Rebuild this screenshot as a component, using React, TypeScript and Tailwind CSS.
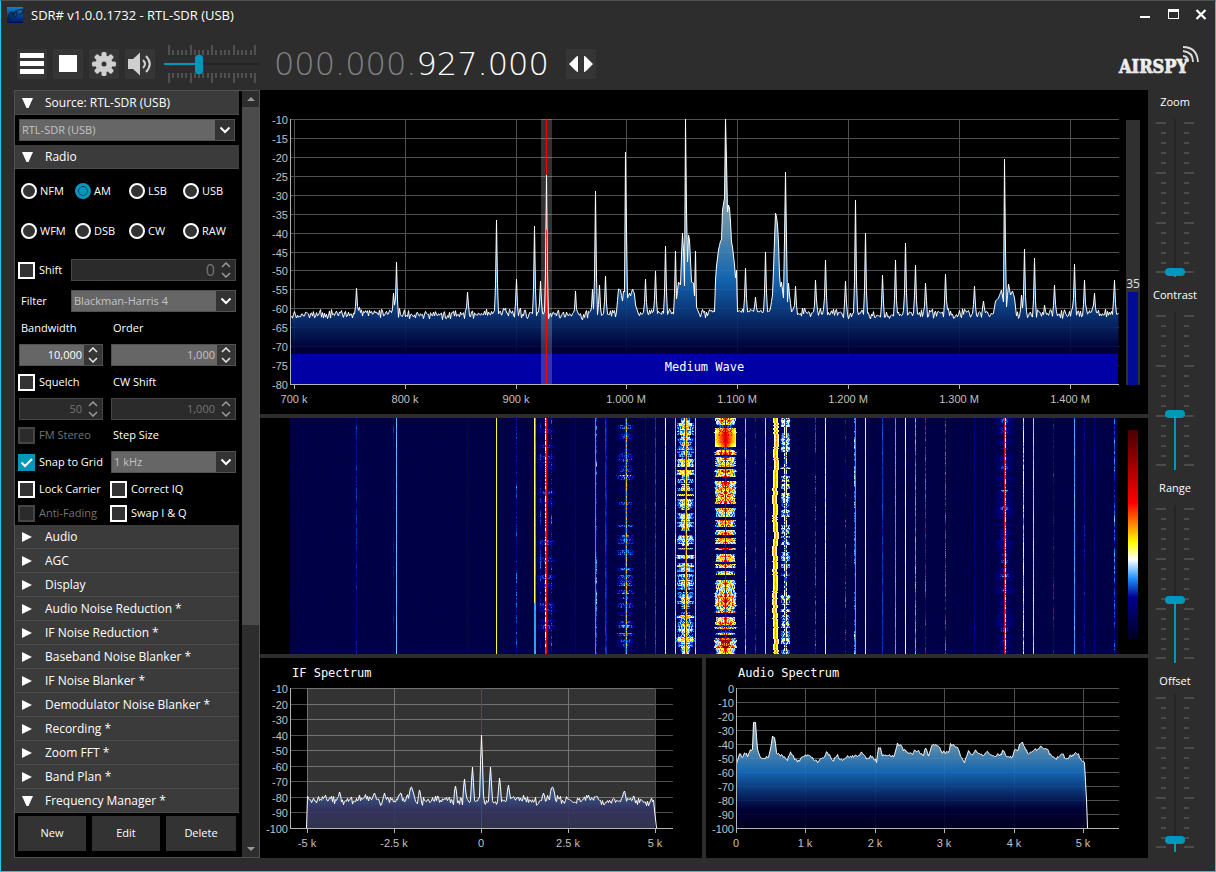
import { useEffect, useLayoutEffect, useRef, useState } from 'react';
import type { ReactNode } from 'react';
import clsx from 'clsx';

type Point = [number, number];

const COLLAPSED_PANELS = [
  'Audio',
  'AGC',
  'Display',
  'Audio Noise Reduction *',
  'IF Noise Reduction *',
  'Baseband Noise Blanker *',
  'IF Noise Blanker *',
  'Demodulator Noise Blanker *',
  'Recording *',
  'Zoom FFT *',
  'Band Plan *',
];
const MODES = ['NFM', 'AM', 'LSB', 'USB', 'WFM', 'DSB', 'CW', 'RAW'];

// Heatmap palette, weakest signal first
const PALETTE: [number, number, number, number][] = [
  [0, 0, 0, 32],
  [0.2, 0, 0, 144],
  [0.29, 30, 144, 255],
  [0.38, 255, 255, 255],
  [0.46, 255, 255, 0],
  [0.645, 255, 0, 0],
  [1, 74, 0, 0],
];

// Narrow carriers: [x, y of the tip]
const CARRIERS: Point[] = [
  [96, 198], [133, 203], [136, 172], [207, 202], [236, 130], [256, 189], [274, 136], [280, 191],
  [286, 85], [315, 201], [332, 199], [335, 101], [339, 195], [345, 186], [385, 189], [395, 181],
  [405, 156], [415, 161], [485, 178], [495, 207], [505, 162], [535, 196], [555, 190], [565, 170],
  [585, 191], [595, 110], [605, 143], [622, 185], [635, 170], [645, 153], [655, 175], [665, 193],
  [685, 184], [714, 196], [723, 211], [761, 205], [764, 159], [774, 168], [784, 215], [794, 195],
  [814, 174], [824, 190], [834, 203], [854, 190],
];

// Wide stations with visible sidebands
const STATIONS: Point[][] = [
  [[356, 222], [358, 199], [360, 200], [362, 211], [363, 201], [364, 202], [365, 62], [366, 140], [367, 208], [369, 203], [370, 206], [372, 199], [374, 204], [375, 215], [378, 224]],
  [[416, 209], [418, 192], [420, 195], [421, 165], [422, 143], [423, 160], [424, 196], [425, 29], [426, 120], [427, 172], [428, 145], [429, 150], [430, 170], [431, 192], [433, 193], [434, 206], [435, 161], [436, 217], [440, 227]],
  [[454, 222], [455, 190], [456, 176], [458, 160], [460, 151], [461, 150], [462, 120], [464, 108], [465, 29], [466, 70], [467, 122], [468, 115], [469, 118], [470, 132], [471, 152], [472, 157], [474, 175], [475, 188], [476, 180], [477, 222]],
  [[510, 218], [512, 205], [513, 180], [514, 150], [515, 123], [516, 127], [517, 135], [518, 152], [519, 185], [520, 197], [521, 192], [522, 200], [523, 208], [524, 150], [525, 82], [526, 150], [527, 212], [528, 193], [529, 205], [531, 222]],
  [[733, 223], [735, 211], [738, 208], [741, 200], [743, 212], [744, 69], [745, 160], [746, 217], [748, 194], [750, 205], [752, 201], [754, 208], [756, 226]],
];

const IF_PEAKS: Point[] = [
  [79, 134], [114, 135], [124, 135], [140, 135], [150, 131], [151, 129], [152, 132], [159, 132],
  [195, 128], [204, 121], [212, 109], [221, 77], [230, 109], [239, 120], [248, 127], [283, 135],
  [291, 131], [292, 129], [293, 131], [364, 133],
];

const AUDIO_TRACE: Point[] = [
  [30, 106], [33, 95], [36, 99], [39, 95], [41, 98], [44, 91], [46, 92], [47, 65], [49, 65], [51, 92],
  [54, 100], [59, 99], [62, 100], [64, 92], [66, 79], [68, 79], [70, 95], [76, 98], [81, 102], [84, 94],
  [87, 99], [91, 104], [96, 99], [101, 97], [106, 100], [111, 104], [117, 99], [120, 95], [124, 99],
  [127, 102], [131, 97], [134, 102], [141, 99], [151, 98], [155, 95], [159, 100], [166, 98], [170, 104],
  [172, 90], [174, 91], [176, 98], [181, 97], [188, 98], [191, 86], [195, 87], [197, 92], [206, 96],
  [208, 91], [214, 95], [217, 97], [219, 89], [222, 98], [226, 86], [232, 88], [235, 94], [242, 95],
  [244, 86], [251, 89], [254, 98], [258, 104], [262, 92], [266, 98], [269, 93], [272, 96], [277, 98],
  [281, 94], [286, 97], [294, 97], [297, 92], [299, 98], [306, 99], [308, 92], [311, 93], [313, 87],
  [316, 84], [319, 92], [322, 95], [327, 93], [334, 89], [341, 92], [344, 97], [349, 102], [354, 96],
  [357, 97], [360, 102], [364, 98], [371, 95], [375, 103], [378, 105], [380, 142], [381, 170],
];

function createRandom(seed: number) {
  let state = seed;
  return () => {
    state = (state * 1664525 + 1013904223) >>> 0;
    return state / 4294967296;
  };
}

function interpolate(points: Point[], x: number): number {
  for (let i = 1; i < points.length; i++) {
    if (x <= points[i][0]) {
      const [x0, y0] = points[i - 1];
      const [x1, y1] = points[i];
      return y0 + ((y1 - y0) * (x - x0)) / (x1 - x0);
    }
  }
  return points[points.length - 1][1];
}

function addPeaks(trace: Map<number, number>, peaks: Point[], slope: number) {
  for (const [x, y] of peaks) {
    for (const side of [-1, 1]) {
      const base = trace.get(x + side) ?? y;
      trace.set(x + side, Math.min(base, base + (y - base) * slope));
    }
    trace.set(x, y);
  }
}

function buildRfTrace(): Point[] {
  const random = createRandom(7);
  const trace = new Map<number, number>();
  for (let x = 31; x <= 858; x++) trace.set(x, 224 + (random() + random() - 1) * 6 + Math.sin(x / 23));
  for (let x = 448; x < 454; x++) trace.set(x, 219 + random() * 4);
  for (let x = 478; x < 512; x++) trace.set(x, 219 + random() * 4);
  addPeaks(trace, CARRIERS, 0.3);
  for (const station of STATIONS) {
    for (let x = station[0][0]; x <= station[station.length - 1][0]; x++) trace.set(x, interpolate(station, x));
  }
  return [...trace].sort((a, b) => a[0] - b[0]);
}

function buildIfTrace(): Point[] {
  const random = createRandom(21);
  const trace = new Map<number, number>();
  for (let x = 48; x <= 392; x++) trace.set(x, 142 + (random() + random() - 1) * 5 + Math.sin(x / 6) * 1.5);
  addPeaks(trace, IF_PEAKS, 0.55);
  return [[46, 170], [47, 138], ...trace, [393, 142], [394, 152], [396, 170]];
}

function buildAudioTrace(): Point[] {
  const random = createRandom(3);
  const trace: Point[] = [];
  for (let x = 30; x <= 381; x++) {
    const jitter = x < 378 ? (random() - 0.5) * 3 : 0;
    trace.push([x, interpolate(AUDIO_TRACE, x) + jitter]);
  }
  return trace;
}

const RF_TRACE = buildRfTrace();
const IF_TRACE = buildIfTrace();
const AUDIO_POINTS = buildAudioTrace();

function useSize() {
  const ref = useRef<HTMLDivElement>(null);
  const [size, setSize] = useState({ width: 0, height: 0 });

  useLayoutEffect(() => {
    const node = ref.current;
    if (!node) return;
    const update = () => setSize({ width: node.clientWidth, height: node.clientHeight });
    update();
    const observer = new ResizeObserver(update);
    observer.observe(node);
    return () => observer.disconnect();
  }, []);

  return { ref, ...size };
}

interface SpectrumProps {
  id: string;
  label: string;
  showTitle?: boolean;
  trace: Point[];
  baseWidth: number;
  baseHeight: number;
  marginRight: number;
  marginBottom: number;
  dbMax: number;
  dbMin: number;
  dbStep: number;
  ticks: [number, string][];
  filter?: { from: number; to: number; center: number; redBelow: number };
  band?: string;
  meter?: number;
}

function Spectrum(props: SpectrumProps) {
  const { id, label, trace, baseWidth, baseHeight, marginRight, marginBottom, dbMax, dbMin, dbStep, ticks, filter } = props;
  const { ref, width, height } = useSize();
  const left = 30;
  const top = props.showTitle ? 30 : 29;
  const right = width - marginRight;
  const bottom = height - marginBottom;
  const scaleX = (right - left) / (baseWidth - marginRight - left);
  const scaleY = (bottom - top) / (baseHeight - marginBottom - top);
  const px = (x: number) => left + (x - left) * scaleX;
  const py = (y: number) => top + (y - top) * scaleY;

  const line = trace.map(([x, y]) => `${(px(x) + 0.5).toFixed(1)},${py(y).toFixed(1)}`).join(' L');
  const start = px(trace[0][0]) + 0.5;
  const end = px(trace[trace.length - 1][0]) + 0.5;
  const rows = (dbMax - dbMin) / dbStep;

  return (
    <div ref={ref} className="min-h-0 min-w-0 overflow-hidden bg-black">
      {width > 0 && (
        <svg width={width} height={height} className="block" role="img" aria-label={label}>
          <defs>
            <linearGradient id={`${id}-fill`} gradientUnits="userSpaceOnUse" x1="0" y1={top} x2="0" y2={bottom}>
              <stop offset="0" stopColor="#e4e4e0" />
              <stop offset="0.4" stopColor="#6d9eb8" />
              <stop offset="0.6" stopColor="#1670c4" />
              <stop offset="0.87" stopColor="#00003a" />
              <stop offset="1" stopColor="#000024" />
            </linearGradient>
          </defs>

          {props.showTitle && (
            <text x={left + 2} y="19" fill="#fff" fontSize="12" className="font-['DejaVu_Sans_Mono',monospace]">{label}</text>
          )}

          <g shapeRendering="crispEdges" stroke="#505050">
            {Array.from({ length: rows }, (_, i) => {
              const y = Math.round(top + ((bottom - top) * i) / rows) + 0.5;
              return <line key={i} x1={left} x2={right} y1={y} y2={y} />;
            })}
            {ticks.map(([x]) => (
              <line key={x} x1={Math.round(px(x)) + 0.5} x2={Math.round(px(x)) + 0.5} y1={top} y2={bottom} />
            ))}
          </g>

          <path d={`M${start},${bottom} L${line} L${end},${bottom} Z`} fill={`url(#${id}-fill)`} fillOpacity="0.9" />
          {props.band && (
            <rect x={left + 1} y={bottom - 30} width={right - left - 2} height="30" fill="#0000c4" fillOpacity="0.8" />
          )}
          {filter && (
            <>
              <rect x={px(filter.from)} y={top} width={px(filter.to) - px(filter.from)} height={bottom - top} fill="#fff" fillOpacity="0.2" />
              <rect x={Math.round(px(filter.center))} y={top} width="1" height={bottom - top} fill="#f00" />
            </>
          )}
          <path d={`M${line}`} fill="none" stroke="#fff" strokeWidth="1" strokeLinejoin="bevel" />
          {filter && (
            <rect
              x={Math.round(px(filter.center))}
              y={py(filter.redBelow)}
              width="1"
              height={bottom - py(filter.redBelow)}
              fill="#f00"
              fillOpacity="0.75"
            />
          )}
          {props.band && (
            <text x={(left + right) / 2} y={bottom - 13} textAnchor="middle" fill="#fff" fontSize="12" className="font-['DejaVu_Sans_Mono',monospace]">
              {props.band}
            </text>
          )}

          <g shapeRendering="crispEdges" stroke="#b4b4b4">
            <line x1={left + 0.5} x2={left + 0.5} y1={top} y2={bottom} />
            <line x1={left} x2={right} y1={bottom + 0.5} y2={bottom + 0.5} />
            {ticks.map(([x]) => (
              <line key={x} x1={Math.round(px(x)) + 0.5} x2={Math.round(px(x)) + 0.5} y1={bottom} y2={bottom + 5} />
            ))}
          </g>

          <g fill="#c0c0c0" fontSize="11" className="font-['Liberation_Sans',sans-serif]">
            {Array.from({ length: rows + 1 }, (_, i) => (
              <text key={i} x={left - 2} y={Math.round(top + ((bottom - top) * i) / rows) + 5} textAnchor="end">
                {dbMax - i * dbStep}
              </text>
            ))}
            {ticks.map(([x, text]) => (
              <text key={x} x={Math.round(px(x))} y={bottom + 19} textAnchor="middle">{text}</text>
            ))}
          </g>

          {props.meter !== undefined && (
            <>
              <rect x={right + 7} y={top + 1} width="14" height={bottom - top} fill="#303030" />
              <rect x={right + 9} y={py(202)} width="10" height={bottom + 1 - py(202)} fill="#000c94" />
              <text x={right + 14} y={py(198)} textAnchor="middle" fill="#e0e0e0" fontSize="12" className="font-['Open_Sans',sans-serif]">
                {props.meter}
              </text>
            </>
          )}
        </svg>
      )}
    </div>
  );
}

const FALL_WIDTH = 828;
const FALL_HEIGHT = 236;

// Single-column carriers: [x, level, flicker]
const FALL_LINES: [number, number, number][] = [
  [66, 0.2, 0.04], [103, 0.19, 0.03], [106, 0.32, 0.01], [177, 0.14, 0.01], [206, 0.46, 0],
  [226, 0.2, 0.08], [245, 0.3, 0.01], [250, 0.17, 0.1], [261, 0.19, 0.08], [285, 0.16, 0.04],
  [305, 0.58, 0.02], [306, 0.22, 0.1], [315, 0.23, 0.02], [316, 0.21, 0.02], [355, 0.2, 0.03],
  [365, 0.24, 0.03], [375, 0.39, 0.05], [385, 0.34, 0.03], [405, 0.34, 0.02], [455, 0.33, 0.05],
  [465, 0.19, 0.06], [475, 0.35, 0.02], [505, 0.15, 0.03], [525, 0.22, 0.06], [535, 0.4, 0.06],
  [555, 0.2, 0.08], [564, 0.25, 0.13], [565, 0.57, 0.02], [575, 0.44, 0.02], [592, 0.23, 0.02],
  [605, 0.3, 0.02], [615, 0.42, 0.03], [625, 0.29, 0.05], [635, 0.23, 0.05], [655, 0.24, 0.06],
  [684, 0.17, 0.03], [694, 0.14, 0.02], [733, 0.35, 0.07], [743, 0.34, 0.02], [763, 0.2, 0.04],
  [784, 0.3, 0.02], [794, 0.19, 0.05], [804, 0.16, 0.03], [824, 0.23, 0.07],
];

function paletteColor(level: number): [number, number, number] {
  const value = Math.max(0, Math.min(1, level));
  for (let i = 1; i < PALETTE.length; i++) {
    const [b, r1, g1, b1] = PALETTE[i];
    if (value <= b) {
      const [a, r0, g0, b0] = PALETTE[i - 1];
      const t = (value - a) / (b - a);
      return [r0 + (r1 - r0) * t, g0 + (g1 - g0) * t, b0 + (b1 - b0) * t];
    }
  }
  return [74, 0, 0];
}

function drawWaterfall(canvas: HTMLCanvasElement) {
  const ctx = canvas.getContext('2d')!;
  const image = ctx.createImageData(FALL_WIDTH, FALL_HEIGHT);
  const random = createRandom(42);
  const levels = new Float32Array(FALL_WIDTH * FALL_HEIGHT);
  const raise = (x: number, y: number, level: number) => {
    const i = y * FALL_WIDTH + x;
    if (level > levels[i]) levels[i] = level;
  };

  for (let y = 0; y < FALL_HEIGHT; y++) {
    for (let x = 0; x < FALL_WIDTH; x++) {
      const near = x > 385 && x < 500 ? 0.025 : 0;
      levels[y * FALL_WIDTH + x] = 0.06 + near + random() * 0.02;
    }
  }

  // Speech-like bursts, mirrored around the carrier
  const drawStation = (center: number, radius: number, strength: number, density: number, floor: number, falloff = 0.5) => {
    let envelope = 0.6;
    let hold = 0;
    const texture: number[] = new Array(radius + 1).fill(0.5);
    for (let y = 0; y < FALL_HEIGHT; y++) {
      if (hold-- <= 0) {
        envelope = random() < density ? 0.6 + random() * 0.4 : random() * 0.3;
        hold = 1 + Math.floor(random() * 4);
      }
      const row = envelope * (0.85 + random() * 0.3);
      const reach = radius * (0.65 + row * 0.35);
      for (let d = 1; d <= radius; d++) {
        texture[d] = texture[d] * 0.3 + random() * 0.7;
        if (d > reach) continue;
        const shape = 1 - (d / radius) ** 2 * falloff;
        const level = floor + strength * row * shape * (0.4 + texture[d] * 0.95);
        raise(center - d, y, level);
        raise(center + d, y, level * (0.94 + random() * 0.12));
      }
    }
  };
  drawStation(256, 9, 0.17, 0.25, 0.07);
  drawStation(335, 9, 0.27, 0.45, 0.05);
  drawStation(395, 9, 0.44, 0.65, 0.06);
  drawStation(395, 5, 0.44, 0.6, 0.06);
  drawStation(435, 11, 0.68, 0.78, 0.06, 0.6);
  drawStation(495, 5, 0.38, 0.6, 0.07);
  drawStation(714, 10, 0.12, 0.4, 0.07);
  drawStation(714, 5, 0.2, 0.35, 0.07);

  // Long burst near the top of the strongest station
  for (let y = 12; y < 29; y++) {
    for (let d = -10; d <= 10; d++) {
      const rise = Math.min(y - 11, 29 - y, 5) * 0.02;
      raise(435 + d, y, 0.56 + rise - Math.abs(d) * 0.022 + random() * 0.04);
    }
  }

  for (const [x, level, flicker] of FALL_LINES) {
    let drift = 0;
    for (let y = 0; y < FALL_HEIGHT; y++) {
      drift = drift * 0.8 + (random() - 0.5) * flicker;
      raise(x, y, level + drift + (random() - 0.5) * flicker);
    }
  }

  let sway = 0;
  for (let y = 0; y < FALL_HEIGHT; y++) {
    const set = (x: number, level: number) => { levels[y * FALL_WIDTH + x] = level; };
    raise(244, y, y < 185 ? 0.43 : 0.3);
    set(255, random() < 0.5 ? 0.38 : 0.27);
    set(256, 0.66);
    set(335, 0.82);
    set(336, random() < 0.5 ? 0.5 : 0.3);
    set(395, 0.66 + random() * 0.25);
    set(396, 0.45 + random() * 0.1);
    set(435, 0.85);
    sway = sway * 0.9 + (random() - 0.5) * 0.9;
    const middle = Math.round(485 + sway);
    for (let d = -2; d <= 2; d++) raise(middle + d, y, 0.51 - Math.abs(d) * 0.07 + random() * 0.05);
    set(494, random() < 0.7 ? 0.38 : 0.25);
    set(495, 0.72);
    set(496, random() < 0.7 ? 0.4 : 0.25);
    set(714, 0.72);
    set(715, random() < 0.55 ? 0.38 : 0.27);
  }

  for (let i = 0; i < levels.length; i++) {
    const [r, g, b] = paletteColor(levels[i]);
    image.data[i * 4] = r;
    image.data[i * 4 + 1] = g;
    image.data[i * 4 + 2] = b;
    image.data[i * 4 + 3] = 255;
  }
  ctx.putImageData(image, 0, 0);
}

function Waterfall() {
  const canvasRef = useRef<HTMLCanvasElement>(null);

  useEffect(() => {
    if (canvasRef.current) drawWaterfall(canvasRef.current);
  }, []);

  return (
    <div className="flex min-h-0 overflow-hidden bg-black pl-[30px]">
      <div className="min-w-0 flex-1">
        <canvas
          ref={canvasRef}
          width={FALL_WIDTH}
          height={FALL_HEIGHT}
          role="img"
          aria-label="Waterfall"
          className="block h-full w-full [image-rendering:pixelated]"
        />
      </div>
      <div className="flex w-[30px] shrink-0 justify-center pt-3 pb-[15px]">
        <div className="w-[10px] bg-[linear-gradient(to_bottom,#4a0000_0%,#f00_35%,#ff0_54%,#fff_62%,#1e90ff_71%,#000090_80%,#000020_100%)]" />
      </div>
    </div>
  );
}

function VerticalSlider({ label, initial, tight = false }: { label: string; initial: number; tight?: boolean }) {
  const [value, setValue] = useState(initial);
  const thumbY = 158 - Math.round((value * 149) / 100);

  return (
    <label className="flex flex-col items-center">
      <span className={clsx('text-[11px] leading-6 text-white', tight ? 'h-5' : 'h-6')}>{label}</span>
      <span className="relative block h-[169px] w-10">
        <svg aria-hidden="true" className="block" width="40" height="169" shapeRendering="crispEdges">
          {Array.from({ length: 16 }, (_, i) => {
            const y = i === 15 ? 158 : 9 + i * 10;
            const major = i % 5 === 0;
            return (
              <g key={i} fill="#4b4b4b">
                <rect x={major ? 1 : 6} y={y - 1} width={major ? 10 : 5} height="2" />
                <rect x="29" y={y - 1} width={major ? 10 : 5} height="2" />
              </g>
            );
          })}
          <rect x="19" y="5" width="2" height="158" fill="#242424" />
          <rect x="19" y={thumbY} width="2" height={163 - thumbY} fill="#0097bd" />
          <rect x="10" y={thumbY - 4} width="20" height="8" rx="4" fill="#0097bd" shapeRendering="auto" />
        </svg>
        <input
          type="range"
          min={0}
          max={100}
          value={value}
          onChange={(e) => setValue(Number(e.target.value))}
          className="absolute inset-0 h-full w-full cursor-pointer opacity-0 [direction:rtl] [writing-mode:vertical-lr]"
        />
      </span>
    </label>
  );
}

function VolumeSlider() {
  const [value, setValue] = useState(35);
  const thumbX = 5 + Math.round((value * 86) / 100);

  return (
    <div className="relative ml-[9px] h-10 w-24">
      <svg aria-hidden="true" className="block" width="96" height="40" shapeRendering="crispEdges">
        {Array.from({ length: 21 }, (_, i) => {
          const x = Math.round(5 + i * 4.3);
          const major = i % 5 === 0;
          return (
            <g key={i} fill="#505050">
              <rect x={x - 1} y={major ? 1 : 6} width="2" height={major ? 10 : 5} />
              <rect x={x - 1} y="29" width="2" height={major ? 10 : 5} />
            </g>
          );
        })}
        <rect x="0" y="19" width="95" height="2" fill="#242424" />
        <rect x="0" y="19" width={thumbX} height="2" fill="#0097bd" />
        <rect x={thumbX - 4} y="11" width="8" height="19" rx="3" fill="#0097bd" shapeRendering="auto" />
      </svg>
      <input
        type="range"
        aria-label="Volume"
        min={0}
        max={100}
        value={value}
        onChange={(e) => setValue(Number(e.target.value))}
        className="absolute inset-0 h-full w-full cursor-pointer opacity-0"
      />
    </div>
  );
}

function ToolButton({ label, children }: { label: string; children: ReactNode }) {
  return (
    <button type="button" aria-label={label} className="flex size-[30px] items-center justify-center bg-[#353535] hover:bg-[#444]">
      {children}
    </button>
  );
}

function PanelHeader({ title, open = false }: { title: string; open?: boolean }) {
  return (
    <button
      type="button"
      aria-expanded={open}
      className="flex h-6 w-full items-center gap-3 border-b border-[#4b4b4b] bg-[#3b3b3b] pl-[7px] text-left text-xs text-white"
    >
      <svg aria-hidden="true" width="11" height="10" viewBox="0 0 11 10" fill="#fff">
        {open ? <path d="M0 0h11L6.5 10h-2z" /> : <path d="M0 0v10L10 5z" />}
      </svg>
      {title}
    </button>
  );
}

function Select({ label, value, id }: { label?: string; value: string; id: string }) {
  return (
    <div className="grid w-full">
      <select
        id={id}
        aria-label={label}
        className="col-start-1 row-start-1 h-[22px] w-full appearance-none border border-[#515151] bg-[#666] pl-0.5 text-[11px] text-[#c4c4c4]"
      >
        <option>{value}</option>
      </select>
      <span className="pointer-events-none col-start-1 row-start-1 my-px mr-px flex w-[19px] items-center justify-center justify-self-end bg-[#333]">
        <svg aria-hidden="true" width="12" height="8" viewBox="0 0 12 8" fill="none" stroke="#fff" strokeWidth="2">
          <path d="M1.5 1.5 6 6l4.500-4.500" />
        </svg>
      </span>
    </div>
  );
}

interface SpinnerProps {
  value: string;
  label?: string;
  id?: string;
  tone?: 'active' | 'muted' | 'disabled';
  large?: boolean;
}

function Spinner({ value, label, id, tone = 'muted', large = false }: SpinnerProps) {
  const disabled = tone === 'disabled';
  return (
    <div className={clsx('flex h-[22px] w-full border', disabled ? 'border-[#464646] bg-[#2b2b2b]' : 'border-[#515151] bg-[#666]')}>
      <input
        type="text"
        id={id}
        aria-label={label}
        defaultValue={value}
        disabled={disabled}
        className={clsx(
          'w-0 min-w-0 flex-1 bg-transparent pr-0.5 text-right',
          large ? 'text-base' : 'text-[11px]',
          tone === 'active' && 'text-white',
          tone === 'muted' && 'text-[#c4c4c4]',
          disabled && 'text-[#747474]',
        )}
      />
      <div className={clsx('flex w-[18px] flex-col', disabled ? 'bg-[#2b2b2b] text-[#9a9a9a]' : 'bg-[#363636] text-[#e8e8e8]')}>
        {['M1 5l4-4 4 4', 'M1 1l4 4 4-4'].map((d, i) => (
          <button key={d} type="button" aria-label={i === 0 ? 'Increase' : 'Decrease'} disabled={disabled} className="flex flex-1 items-center justify-center">
            <svg aria-hidden="true" width="10" height="6" viewBox="0 0 10 6" fill="none" stroke="currentColor" strokeWidth="1.5"><path d={d} /></svg>
          </button>
        ))}
      </div>
    </div>
  );
}

function Checkbox({ label, checked = false, disabled = false }: { label: string; checked?: boolean; disabled?: boolean }) {
  return (
    <label className={clsx('flex items-center gap-1 text-[11px] whitespace-nowrap', disabled ? 'text-[#747474]' : 'text-white')}>
      <span className="grid size-[17px] shrink-0">
        <input
          type="checkbox"
          defaultChecked={checked}
          disabled={disabled}
          className="peer col-start-1 row-start-1 size-[17px] appearance-none border-2 border-white bg-[#333] checked:border-[#0097bd] checked:bg-[#0097bd] disabled:border-[#464646] disabled:bg-[#2b2b2b]"
        />
        <svg
          aria-hidden="true"
          viewBox="0 0 17 17"
          fill="none"
          stroke="#fff"
          strokeWidth="2"
          className="pointer-events-none col-start-1 row-start-1 hidden size-[17px] peer-checked:block"
        >
          <path d="M3.500 8.500 7 12l7-7" />
        </svg>
      </span>
      {label}
    </label>
  );
}

function RadioPanel() {
  const rowClass = 'grid grid-cols-[92px_1fr] items-center';
  return (
    <div className="px-[3px] pt-0.5 pb-0.5">
      <div className="grid grid-cols-[repeat(4,54px)] pl-[3px]">
        {MODES.map((mode) => (
          <label key={mode} className="flex h-10 items-center gap-[3px] text-[11px] text-white">
            <input
              type="radio"
              name="mode"
              defaultChecked={mode === 'AM'}
              className="size-4 shrink-0 appearance-none rounded-full border-2 border-white bg-[#333] checked:border-[3px] checked:border-[#0097bd] checked:bg-[#0097bd] checked:shadow-[inset_0_0_0_1px_#234]"
            />
            {mode}
          </label>
        ))}
      </div>

      <div className="grid h-[38px] grid-cols-[53px_1fr] items-center">
        <Checkbox label="Shift" />
        <Spinner label="Shift value" value="0" tone="disabled" large />
      </div>
      <div className="grid h-6 grid-cols-[53px_1fr] items-center">
        <label htmlFor="filter" className="pl-[3px] text-[11px] text-white">Filter</label>
        <Select id="filter" value="Blackman-Harris 4" />
      </div>
      <div className={clsx(rowClass, 'h-[30px] pl-[3px] text-[11px] text-white')}>
        <label htmlFor="bandwidth">Bandwidth</label>
        <label htmlFor="order">Order</label>
      </div>
      <div className={clsx(rowClass, 'h-6 pl-px')}>
        <div className="w-[84px]"><Spinner id="bandwidth" value="10,000" tone="active" /></div>
        <Spinner id="order" value="1,000" />
      </div>
      <div className={clsx(rowClass, 'h-[30px] text-[11px] text-white')}>
        <Checkbox label="Squelch" />
        <label htmlFor="cw-shift" className="pl-[3px]">CW Shift</label>
      </div>
      <div className={clsx(rowClass, 'h-6 pl-px')}>
        <div className="w-[84px]"><Spinner label="Squelch level" value="50" tone="disabled" /></div>
        <Spinner id="cw-shift" value="1,000" tone="disabled" />
      </div>
      <div className={clsx(rowClass, 'h-7 text-[11px] text-white')}>
        <Checkbox label="FM Stereo" disabled />
        <label htmlFor="step-size" className="pl-[3px]">Step Size</label>
      </div>
      <div className={clsx(rowClass, 'h-[26px]')}>
        <Checkbox label="Snap to Grid" checked />
        <div className="pl-px"><Select id="step-size" value="1 kHz" /></div>
      </div>
      <div className={clsx(rowClass, 'h-7')}>
        <Checkbox label="Lock Carrier" />
        <Checkbox label="Correct IQ" />
      </div>
      <div className={clsx(rowClass, 'h-5')}>
        <Checkbox label="Anti-Fading" disabled />
        <Checkbox label="Swap I & Q" />
      </div>
    </div>
  );
}

function Sidebar() {
  return (
    <aside className="flex w-[246px] shrink-0 justify-between border border-[#515151] bg-black">
      <div className="w-56">
        <PanelHeader title="Source: RTL-SDR (USB)" open />
        <div className="p-1">
          <Select id="source" label="Source" value="RTL-SDR (USB)" />
        </div>
        <PanelHeader title="Radio" open />
        <RadioPanel />
        {COLLAPSED_PANELS.map((title) => <PanelHeader key={title} title={title} />)}
        <PanelHeader title="Frequency Manager *" open />
        <div className="grid grid-cols-[68px_68px_1fr] gap-1.5 p-[3px]">
          {['New', 'Edit', 'Delete'].map((action) => (
            <button key={action} type="button" className="h-[35px] bg-[#333] text-[11px] text-white hover:bg-[#444]">{action}</button>
          ))}
        </div>
      </div>
      <div className="flex w-[17px] flex-col bg-[#2d2d2d]">
        <button type="button" aria-label="Scroll up" className="flex h-4 shrink-0 items-center justify-center">
          <svg aria-hidden="true" width="8" height="4" viewBox="0 0 8 4" fill="#999"><path d="M4 0l4 4H0z" /></svg>
        </button>
        <div className="flex-12 bg-[#4b4b4b]" />
        <div className="flex-5" />
        <button type="button" aria-label="Scroll down" className="flex h-4 shrink-0 items-center justify-center">
          <svg aria-hidden="true" width="8" height="4" viewBox="0 0 8 4" fill="#999"><path d="M0 0h8L4 4z" /></svg>
        </button>
      </div>
    </aside>
  );
}

function TitleBar() {
  return (
    <header className="flex h-[30px] items-center justify-between pr-2 pb-0.5 pl-1.5">
      <div className="flex items-center gap-2">
        <svg aria-hidden="true" width="16" height="16" viewBox="0 0 16 16">
          <defs>
            <linearGradient id="app-icon" x1="0" y1="0" x2="0" y2="1">
              <stop offset="0" stopColor="#0a84d0" />
              <stop offset="1" stopColor="#001060" />
            </linearGradient>
          </defs>
          <rect width="16" height="16" fill="url(#app-icon)" />
          <path d="M1 12c0-6 4-8 5-6s-2 7-3 7-2-2 1-5 5-4 6-2-2 5-3 4 1-6 4-7 5-1 5 1-3 4-4 3" fill="none" stroke="#0a2848" strokeWidth="1.300" />
        </svg>
        <h1 className="text-[13px] leading-4 text-white">SDR# v1.0.0.1732 - RTL-SDR (USB)</h1>
      </div>
      <div className="flex items-center gap-4">
        <button type="button" aria-label="Minimize">
          <svg aria-hidden="true" width="12" height="12" fill="#fff"><path d="M1 7h10v2H1z" /></svg>
        </button>
        <button type="button" aria-label="Maximize">
          <svg aria-hidden="true" width="12" height="12" fill="#fff"><path fillRule="evenodd" d="M1 0h11v10H1zM2 3v6h9V3z" /></svg>
        </button>
        <button type="button" aria-label="Close">
          <svg aria-hidden="true" width="12" height="12" stroke="#fff" strokeWidth="2.200"><path d="M1.500 1l9 9M10.500 1l-9 9" /></svg>
        </button>
      </div>
    </header>
  );
}

function Toolbar() {
  return (
    <div className="flex h-[59px] items-center justify-between pt-1.5 pr-4 pl-4">
      <div className="flex items-center">
        <div className="flex gap-1.5">
          <ToolButton label="Menu">
            <svg aria-hidden="true" width="24" height="22" fill="#fff"><path d="M0 0h24v5H0zM0 8h24v5H0zM0 16h24v5H0z" /></svg>
          </ToolButton>
          <ToolButton label="Stop">
            <svg aria-hidden="true" width="18" height="18" fill="#fff"><path d="M0 0h18v17H0z" /></svg>
          </ToolButton>
          <ToolButton label="Settings">
            <svg aria-hidden="true" width="24" height="24" viewBox="-12 -12 24 24">
              <circle r="8.500" fill="#cfcfcf" />
              {[0, 45, 90, 135].map((angle) => (
                <rect key={angle} x="-2.500" y="-12" width="5" height="24" rx="1.500" fill="#cfcfcf" transform={`rotate(${angle})`} />
              ))}
              <circle r="2.500" fill="#353535" />
            </svg>
          </ToolButton>
          <ToolButton label="Mute">
            <svg aria-hidden="true" width="25" height="24" viewBox="0 0 25 24" fill="none" stroke="#cfcfcf" strokeWidth="2">
              <path d="M0 7h5l7-6.500v23L5 17H0z" fill="#cfcfcf" stroke="none" />
              <path d="M15 8q4 4 0 8M18 4q7.500 8 0 16" />
            </svg>
          </ToolButton>
        </div>
        <VolumeSlider />
        <div className="ml-[14px] font-['DejaVu_Sans',sans-serif] text-[32px] leading-10 font-extralight whitespace-nowrap text-white">
          <span className="text-[#808080]">000.000.</span>927.000
        </div>
        <div className="ml-[17px]">
          <ToolButton label="Tuning step">
            <svg aria-hidden="true" width="24" height="18" fill="#fff"><path d="M9 1v16q-1 0-2-1L0 9l7-7q1-1 2-1zM15 1v16q1 0 2-1l7-7-7-7q-1-1-2-1z" /></svg>
          </ToolButton>
        </div>
      </div>
      <svg role="img" aria-label="AIRSPY" width="82" height="36" viewBox="0 0 82 36">
        <defs>
          <linearGradient id="logo-fill" x1="0" y1="0" x2="0" y2="1">
            <stop offset="0" stopColor="#fff" />
            <stop offset="1" stopColor="#d8d8d8" />
          </linearGradient>
        </defs>
        <text x="2" y="27" fontSize="18" fontWeight="700" fill="url(#logo-fill)" stroke="#eee" strokeWidth="0.700" className="font-['DejaVu_Serif_Condensed','DejaVu_Serif',serif]">AIRSPY</text>
        <path d="M66 10q5 0 5 6M66 5q10 1 10 11M66 1q14 0 15 15" fill="none" stroke="#ddd" strokeWidth="1.800" />
      </svg>
    </div>
  );
}

export default function App() {
  return (
    <div className="flex min-h-screen flex-col border border-t-[#505050] border-r-[#18c8e8] border-b-[#18c8e8] border-l-[#18c8e8] bg-[#2d2d2d] font-['Open_Sans','Noto_Sans',sans-serif]">
      <TitleBar />
      <Toolbar />
      <div className="flex flex-1 pb-[13px] pl-[13px]">
        <Sidebar />
        <main className="grid min-w-0 flex-1 grid-rows-[324fr_236fr_200fr] gap-1">
          <Spectrum
            id="rf"
            label="RF Spectrum"
            trace={RF_TRACE}
            baseWidth={888}
            baseHeight={324}
            marginRight={29}
            marginBottom={30}
            dbMax={-10}
            dbMin={-80}
            dbStep={5}
            ticks={[
              [34, '700 k'],
              [145, '800 k'],
              [256, '900 k'],
              [366, '1.000 M'],
              [477, '1.100 M'],
              [588, '1.200 M'],
              [699, '1.300 M'],
              [810, '1.400 M'],
            ]}
            filter={{ from: 281, to: 292, center: 286, redBelow: 140 }}
            band="Medium Wave"
            meter={35}
          />
          <Waterfall />
          <div className="grid min-h-0 grid-cols-2 gap-1">
            <Spectrum
              id="if"
              label="IF Spectrum"
              showTitle
              trace={IF_TRACE}
              baseWidth={442}
              baseHeight={200}
              marginRight={29}
              marginBottom={30}
              dbMax={-10}
              dbMin={-100}
              dbStep={10}
              ticks={[[47, '-5 k'], [134, '-2.5 k'], [221, '0'], [308, '2.5 k'], [395, '5 k']]}
              filter={{ from: 47, to: 395, center: 221, redBelow: 100 }}
            />
            <Spectrum
              id="audio"
              label="Audio Spectrum"
              showTitle
              trace={AUDIO_POINTS}
              baseWidth={442}
              baseHeight={200}
              marginRight={29}
              marginBottom={30}
              dbMax={0}
              dbMin={-100}
              dbStep={10}
              ticks={[[30, '0'], [99, '1 k'], [169, '2 k'], [238, '3 k'], [308, '4 k'], [377, '5 k']]}
            />
          </div>
        </main>
        <div className="flex w-[67px] shrink-0 flex-col pr-[13px]">
          <VerticalSlider label="Zoom" initial={0} />
          <VerticalSlider label="Contrast" initial={34} />
          <VerticalSlider label="Range" initial={39} />
          <VerticalSlider label="Offset" initial={5} tight />
        </div>
      </div>
    </div>
  );
}
